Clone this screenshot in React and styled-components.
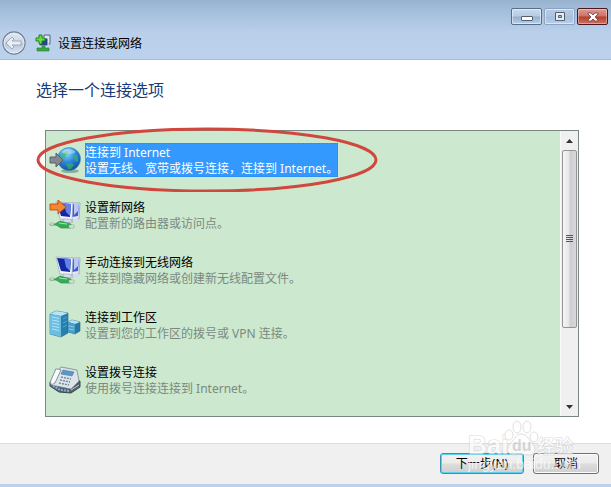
import React, { useState } from 'react';
import styled, { createGlobalStyle } from 'styled-components'


const GlobalStyle = createGlobalStyle`
  * { box-sizing: border-box; }
  body {
    margin: 0;
    font-family: "Noto Sans", "Noto Sans CJK SC", sans-serif;
    font-size: 12px;
    color: #000;
  }
  button { font: inherit; }
`

const GlobeIcon = () => (
  <Icon viewBox="0 0 32 32" aria-hidden="true">
    <defs>
      <radialGradient id="globe" cx="0.4" cy="0.25" r="0.8">
        <stop offset="0" stopColor="#8fdcff" />
        <stop offset="0.5" stopColor="#2a87d8" />
        <stop offset="1" stopColor="#0b4a9c" />
      </radialGradient>
    </defs>
    <ellipse cx="21" cy="28" rx="9" ry="2" fill="#8fae94" />
    <circle cx="20" cy="16" r="11.500" fill="url(#globe)" stroke="#4b8bb8" strokeWidth="0.6" />
    <path d="M12 12l3-3 4-1 1 2-3 2-1 3-3 1zM26 10l3 4v5l-3-1-1-4zM17 21l5-1 3 2-3 4-3 0z" fill="#42b45a" opacity="0.65" />
    <path d="M12 9q8-7 15 0-7 4-15 0z" fill="#fff" opacity="0.35" />
    <path d="M1 14h6v-4l7 7-7 7v-4H1z" fill="#85878f" stroke="#5e6069" />
  </Icon>
)

const ComputerIcon = ({ arrow }) => (
  <Icon viewBox="0 0 32 32" aria-hidden="true">
    <path d="M22 5h9l-1 16-8 1z" fill="#e4e9f5" stroke="#8b96b5" strokeWidth="0.7" />
    <path d="M23 6h7l-1 12-6 1z" fill="#3f5ccf" />
    <path d="M25 6h5l-1 7-4 4z" fill="#b9c7f8" />
    <path d="M7 4l17 1-1 17-12-1z" fill="#f3f5fb" stroke="#9aa4c0" strokeWidth="0.7" />
    <path d="M8 5l14 1-1 13-9-1z" fill="#1228a0" />
    <path d="M15 5l7 1-1 12-4-4z" fill="#6482e6" />
    <path d="M14 21h7l3 3-10 1z" fill="#d6dce8" stroke="#8e98ac" strokeWidth="0.5" />
    <path d="M24 21h5l2 3h-6z" fill="#d6dce8" />
    <path d="M1 26h5l5-3 11 3v4H12l-5-3H1z" fill="#35ad57" stroke="#218544" strokeWidth="0.6" />
    <path d="M1 25h4v2H1zM20 27h5v3h-5z" fill="#d9e4da" stroke="#83988a" strokeWidth="0.5" />
    <path d="M10 25l8 1" stroke="#9ee3ac" strokeWidth="1.2" />
    {arrow && <path d="M1 6h8V2l8 7-8 7v-4H1z" fill="#f58634" stroke="#bd4f15" strokeWidth="0.9" />}
  </Icon>
)

const ServerIcon = () => (
  <Icon viewBox="0 0 32 32" aria-hidden="true">
    <path d="M1 6l6-3 12 2v20l-7 4-11-3z" fill="#277fae" stroke="#2a6687" strokeWidth="0.6" />
    <path d="M1 6l6-3 12 2-7 3z" fill="#b9e4f5" />
    <path d="M1 6l11 2v21L1 26z" fill="#6dbde2" />
    <path d="M3 9l7 1.500M3 12l7 1.500M3 15l7 1.500M3 18l7 1.500M3 21l7 1.500" stroke="#b4e5f7" strokeWidth="1" />
    <path d="M14 11l4-2M14 15l4-2M14 19l4-2" stroke="#4fa7d0" />
    <path d="M19 14l4-2 8 2v9l-5 3-7-2z" fill="#237aa7" stroke="#2a6687" strokeWidth="0.6" />
    <path d="M19 14l4-2 8 2-5 2z" fill="#b9e4f5" />
    <path d="M19 14l7 2v10l-7-2z" fill="#4a9fc9" />
    <path d="M20 18l5 1M20 21l5 1" stroke="#8fcde6" />
  </Icon>
)

const PhoneIcon = () => (
  <Icon viewBox="0 0 32 32" aria-hidden="true">
    <path d="M1 23l9 6 12 1 9-6v-6L10 15 1 19z" fill="#55606a" stroke="#3c464e" />
    <path d="M2 19l10-15 16 3 2 11-8 8-20-4z" fill="#dde4e9" stroke="#788690" strokeWidth="0.8" />
    <path d="M6 8q0-3 3-2l3 1-6 13q-3 3-5 0l1-3z" fill="#f7fafb" stroke="#6d7981" strokeWidth="0.8" />
    <path d="M14 7l11 2-2 4-11-2z" fill="#5598cb" stroke="#40708f" strokeWidth="0.5" />
    <path d="M12 14l10 2M11 17l10 2M10 20l10 2" stroke="#6f879c" strokeWidth="1.400" strokeDasharray="2 1" />
    <path d="M4 23l7 4 10 1" stroke="#7db3dc" strokeWidth="2" strokeDasharray="2 1" fill="none" />
    <path d="M22 27l8-5" stroke="#c4ccd1" />
  </Icon>
)

const NetworkIcon = () => (
  <svg width="16" height="18" viewBox="0 0 16 18" aria-hidden="true">
    <path d="M9 1h6v9H9z" fill="#dce3ee" stroke="#59677f" />
    <path d="M4 4h9v8H4z" fill="#27458f" stroke="#e5ebf4" />
    <path d="M7 12h3v2h4v3H2v-3h5z" fill="#38a844" stroke="#237c31" strokeWidth="0.6" />
    <path d="M4 1h3v3h3v3H7v3H4V7H1V4h3z" fill="#6ddb45" stroke="#18831c" />
  </svg>
)

const BackIcon = () => (
  <svg width="24" height="24" viewBox="0 0 24 24" aria-hidden="true">
    <defs>
      <linearGradient id="back" x1="0" y1="0" x2="0" y2="1">
        <stop offset="0" stopColor="#e3eaf2" />
        <stop offset="0.48" stopColor="#cbd6e4" />
        <stop offset="0.52" stopColor="#b5c4d6" />
        <stop offset="1" stopColor="#dbe7f4" />
      </linearGradient>
    </defs>
    <circle cx="12" cy="12" r="11" fill="url(#back)" stroke="#72839a" strokeWidth="1.300" />
    <circle cx="12" cy="12" r="10" fill="none" stroke="#eef4fa" strokeWidth="0.8" />
    <path d="M4 12l6-6 2 2-2 2h9v4h-9l2 2-2 2z" fill="#e8eef5" stroke="#96a5b8" strokeWidth="0.9" />
  </svg>
)

const MinimizeIcon = () => (
  <svg width="12" height="12" viewBox="0 0 12 12" aria-hidden="true">
    <rect x="0.5" y="5.500" width="11" height="4" rx="0.5" fill="#fff" stroke="#555f6d" />
  </svg>
)

const MaximizeIcon = () => (
  <svg width="12" height="12" viewBox="0 0 12 12" aria-hidden="true">
    <path d="M1.500 1.500h9v8h-9z" fill="#e6ecf3" stroke="#555f6d" />
    <path d="M4.500 4.500h3v2h-3z" fill="#a9bfd8" stroke="#555f6d" />
  </svg>
)

const CloseIcon = () => (
  <svg width="12" height="12" viewBox="0 0 12 12" aria-hidden="true">
    <path d="M1 2h3l2 2 2-2h3v1L8 6l3 3v1H8L6 8l-2 2H1V9l3-3-3-3z" fill="#fff" stroke="#694048" strokeWidth="0.8" />
  </svg>
)

const Watermark = () => (
  <WatermarkSvg viewBox="0 0 126 60" aria-hidden="true">
    <g fill="#fff" stroke="#c8c8c8" strokeWidth="1.200" paintOrder="stroke">
      <text x="2" y="36" fontSize="26" fontWeight="700">Bai</text>
      <text x="71" y="35" fontSize="18" fontWeight="500">经验</text>
    </g>
    <g fill="#fff" stroke="#cfcfcf" strokeWidth="1">
      <ellipse cx="43" cy="17" rx="4" ry="5" />
      <ellipse cx="51" cy="9" rx="4" ry="6" />
      <ellipse cx="61" cy="9" rx="4" ry="6" />
      <ellipse cx="68" cy="19" rx="4" ry="5" />
      <path d="M55 16c6 0 7 5 11 9 6 6 2 13-4 12-5-1-9-1-13 0-8 1-10-7-4-12 4-4 5-9 10-9z" />
    </g>
    <text x="46" y="33" fontSize="16" fontWeight="700" fill="#c6c6c6">du</text>
    <text x="2" y="51" fontSize="14" fill="#fff">jingyan.baidu.com</text>
  </WatermarkSvg>
)

const OPTIONS = [
  { id: 'internet', title: '连接到 Internet', desc: '设置无线、宽带或拨号连接，连接到 Internet。', icon: <GlobeIcon />, marked: true },
  { id: 'network', title: '设置新网络', desc: '配置新的路由器或访问点。', icon: <ComputerIcon arrow /> },
  { id: 'wireless', title: '手动连接到无线网络', desc: '连接到隐藏网络或创建新无线配置文件。', icon: <ComputerIcon /> },
  { id: 'workplace', title: '连接到工作区', desc: '设置到您的工作区的拨号或 VPN 连接。', icon: <ServerIcon /> },
  { id: 'dialup', title: '设置拨号连接', desc: '使用拨号连接连接到 Internet。', icon: <PhoneIcon /> },
]

const App = () => {
  const [selected, setSelected] = useState('internet')

  return (
    <Window>
      <GlobalStyle />
      <Header>
        <Controls>
          <ControlButton aria-label="最小化"><MinimizeIcon /></ControlButton>
          <ControlButton aria-label="最大化" $faded><MaximizeIcon /></ControlButton>
          <ControlButton aria-label="关闭" $close><CloseIcon /></ControlButton>
        </Controls>
        <TitleRow>
          <BackButton aria-label="返回"><BackIcon /></BackButton>
          <NetworkIcon />
          <span>设置连接或网络</span>
        </TitleRow>
      </Header>

      <Content>
        <Heading>选择一个连接选项</Heading>
        <ListBox>
          <List>
            {OPTIONS.map(({ id, title, desc, icon, marked }) => (
              <Item key={id}>
                <Option aria-pressed={selected === id} onClick={() => setSelected(id)}>
                  {icon}
                  <Label $selected={selected === id}>
                    <span>{title}</span>
                    <Desc $selected={selected === id}>{desc}</Desc>
                  </Label>
                </Option>
                {marked && (
                  <Marker viewBox="0 0 342 66" aria-hidden="true">
                    <ellipse cx="171" cy="34" rx="169" ry="31" fill="none" stroke="#d0473d" strokeWidth="3" />
                  </Marker>
                )}
              </Item>
            ))}
          </List>
          <ScrollBar>
            <ScrollArrow aria-label="向上滚动">
              <svg width="7" height="4" viewBox="0 0 7 4"><path d="M0 4l3.500-4L7 4z" fill="#333" /></svg>
            </ScrollArrow>
            <Track>
              <Thumb><i /><i /><i /><i /></Thumb>
            </Track>
            <ScrollArrow aria-label="向下滚动">
              <svg width="7" height="4" viewBox="0 0 7 4"><path d="M0 0h7L3.500 4z" fill="#333" /></svg>
            </ScrollArrow>
          </ScrollBar>
        </ListBox>
      </Content>

      <Footer>
        <ActionButton $primary>下一步(N)</ActionButton>
        <ActionButton>取消</ActionButton>
        <Watermark />
      </Footer>
    </Window>
  )
}

export default App


const Window = styled.div`
  display: flex;
  flex-direction: column;
  min-height: 100vh;
  background: #fff;
  border-bottom: 3px solid #bdd0e9;
`

const Header = styled.header`
  height: 60px;
  background: linear-gradient(#98b3d0, #a9c2df 16px, #b9cfea 32px, #bbd1ec);
  border-bottom: 1px solid #a5b9d6;
`

const Controls = styled.div`
  display: flex;
  justify-content: flex-end;
  gap: 2px;
  height: 25px;
  padding: 8px 3px 0 0;
`

const ControlButton = styled.button`
  display: flex;
  align-items: center;
  justify-content: center;
  width: 31px;
  height: 17px;
  padding: 0;
  border: 1px solid ${props => props.$close ? '#4a1820' : props.$faded ? '#8ba4c2' : '#586d89'};
  border-radius: 2px;
  box-shadow: inset 0 0 0 1px rgba(255, 255, 255, ${props => props.$close ? 0.35 : 0.5});
  background: ${props => props.$close
    ? 'linear-gradient(#dc9c90, #cd7264 48%, #b53d2b 52%, #d07460)'
    : props.$faded
      ? 'linear-gradient(#b5cbe4, #abc4e0 48%, #a3bddb 52%, #b8cfe9)'
      : 'linear-gradient(#c8daed, #b6cce4 48%, #94afcd 52%, #b6d0ea)'};
`

const TitleRow = styled.div`
  display: flex;
  align-items: center;
  gap: 7px;
  height: 36px;
  padding-left: 2px;
`

const BackButton = styled.button`
  display: flex;
  margin-right: 2px;
  padding: 0;
  border: 0;
  background: none;
`

const Content = styled.main`
  flex: 1;
  display: flex;
  flex-direction: column;
  padding: 20px 32px 26px 36px;
`

const Heading = styled.h1`
  margin: 0 0 30px;
  font-size: 16px;
  font-weight: 400;
  line-height: 20px;
  color: #163a7c;
`

const ListBox = styled.div`
  flex: 1;
  display: flex;
  margin-left: 9px;
  border: 1px solid #7a8680;
  background: #cce8cf;
`

const List = styled.ul`
  flex: 1;
  display: flex;
  flex-direction: column;
  gap: 21px;
  margin: 0;
  padding: 12px 3px;
  list-style: none;
`

const Item = styled.li`
  position: relative;
`

const Option = styled.button`
  display: flex;
  gap: 4px;
  width: 100%;
  height: 34px;
  padding: 0;
  border: 0;
  background: none;
  color: inherit;
  text-align: left;
`

const Icon = styled.svg`
  flex: none;
  width: 32px;
  height: 32px;
`

const Label = styled.span`
  display: flex;
  flex-direction: column;
  padding-top: 2px;
  line-height: 16px;
  white-space: nowrap;
  color: ${props => props.$selected ? '#fff' : '#000'};
  background: ${props => props.$selected ? '#3399ff' : 'none'};
  outline: ${props => props.$selected ? '1px dotted #4f7fae' : 'none'};
  outline-offset: -1px;
`

const Desc = styled.span`
  color: ${props => props.$selected ? '#fff' : '#7b8a7e'};
`

/* hand-drawn highlight ring over the first option */
const Marker = styled.svg`
  position: absolute;
  top: -17px;
  left: -13px;
  width: 342px;
  height: 66px;
  pointer-events: none;
`

const ScrollBar = styled.div`
  display: flex;
  flex-direction: column;
  width: 18px;
  padding: 0 1px;
  background: #f0f0f0;
  border-left: 1px solid #fafafa;
`

const ScrollArrow = styled.button`
  display: flex;
  align-items: center;
  justify-content: center;
  height: 19px;
  padding: 0;
  border: 0;
  background: none;
`

const Track = styled.div`
  flex: 1;
`

const Thumb = styled.div`
  display: flex;
  flex-direction: column;
  align-items: center;
  justify-content: center;
  gap: 1px;
  height: 72%;
  border: 1px solid #949494;
  border-radius: 2px;
  background: linear-gradient(to right, #f6f6f6, #e6e6e8 45%, #cdcdd2 55%, #d8d8dc);

  i {
    width: 7px;
    height: 1px;
    background: #555;
  }
`

const Footer = styled.footer`
  position: relative;
  display: flex;
  justify-content: flex-end;
  gap: 9px;
  height: 41px;
  padding: 9px 12px 0 0;
  border-top: 1px solid #dcdcdc;
  background: #f0f0f0;
`

const ActionButton = styled.button`
  width: ${props => props.$primary ? 84 : 66}px;
  height: 21px;
  padding: 0;
  border: 1px solid ${props => props.$primary ? '#3c8fb5' : '#707070'};
  border-radius: 3px;
  box-shadow: inset 0 0 0 1px ${props => props.$primary ? '#5fd0f2' : '#fcfcfc'};
  background: linear-gradient(#f2f2f2, #ebebeb 48%, #dddddd 52%, #cfcfcf);
  line-height: 17px;
`

const WatermarkSvg = styled.svg`
  position: absolute;
  right: 19px;
  bottom: 6px;
  width: 126px;
  height: 60px;
  opacity: 0.65;
  pointer-events: none;
  font-family: "Liberation Sans", "Noto Sans CJK SC", sans-serif;
`
